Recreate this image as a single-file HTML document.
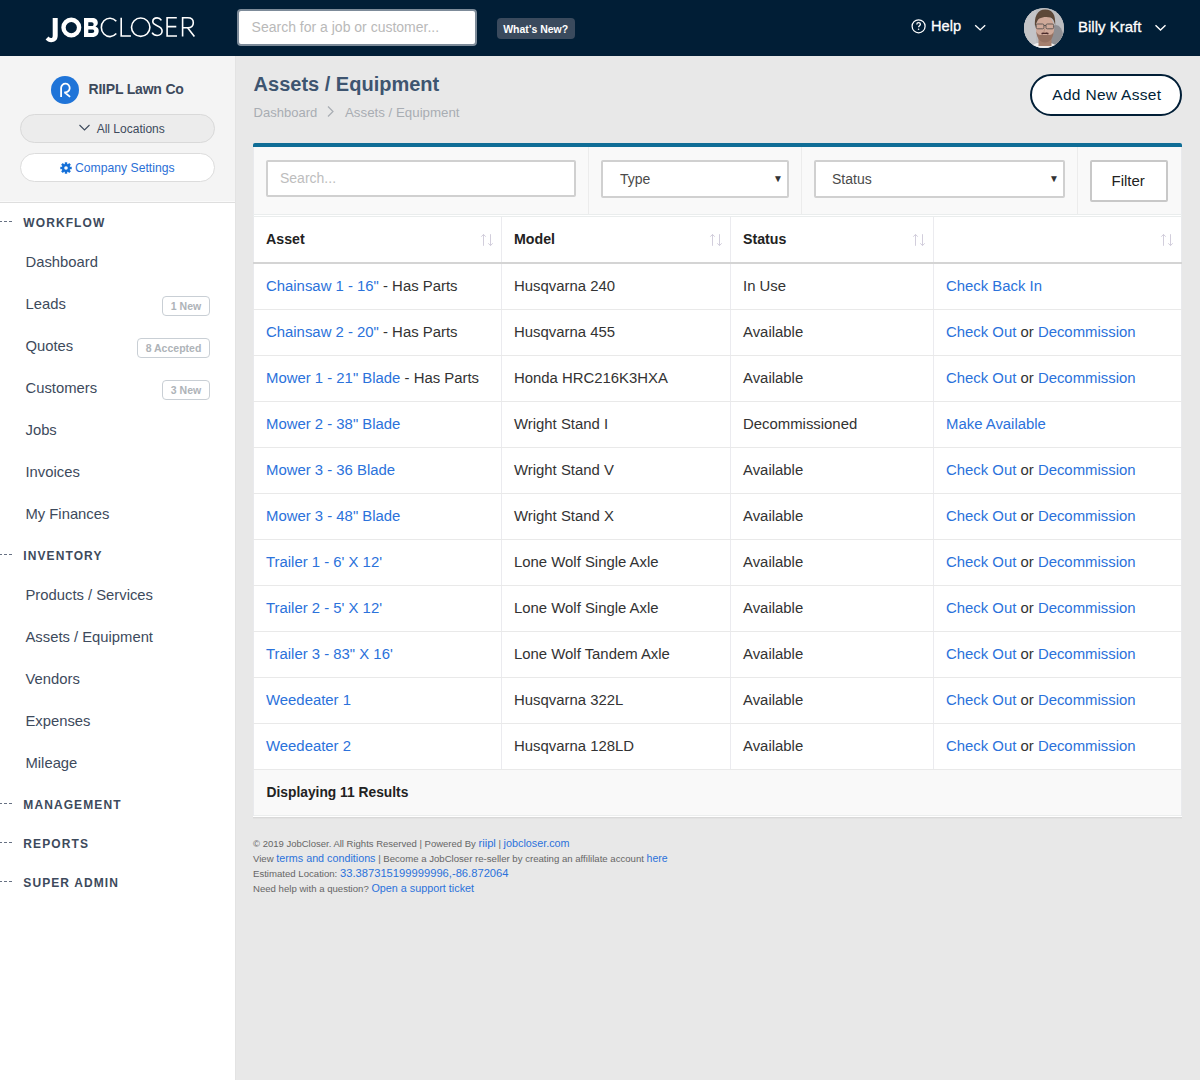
<!DOCTYPE html>
<html><head><meta charset="utf-8">
<style>
*{box-sizing:border-box;margin:0;padding:0}
html,body{width:1200px;height:1080px;overflow:hidden;background:#e8e8e8;font-family:"Liberation Sans",sans-serif;position:relative}
.abs{position:absolute}
.t{position:absolute;white-space:nowrap;line-height:1}
</style></head><body>
<div class="abs" style="left:0px;top:0px;width:1200px;height:56px;background:#011e36"></div>
<svg class="abs" style="left:0;top:0" width="200" height="56" viewBox="0 0 200 56">
<g fill="#fff">
<path d="M52.7 18 h5 v17.5 c0 4.6 -3 6.7 -6.5 6.7 c-2.3 0 -4.2 -1 -5.6 -2.6 l2.9 -3 c0.8 1 1.7 1.5 2.6 1.5 c1.1 0 1.6 -0.8 1.6 -2.7 z"/>
<path fill-rule="evenodd" d="M71.3 17.5 a10 10 0 1 1 0 20 a10 10 0 1 1 0 -20 z M71.3 22 a5.6 5.6 0 1 0 0 11.2 a5.6 5.6 0 1 0 0 -11.2 z"/>
<path fill-rule="evenodd" d="M84 18 h8.2 c3.6 0 5.6 2 5.6 4.8 c0 1.8 -0.9 3 -2.3 3.7 c2 0.6 3.2 2.2 3.2 4.4 c0 3.3 -2.4 6.1 -6.3 6.1 h-8.4 z M88.3 22.2 v3.9 h3.3 c1.3 0 2 -0.8 2 -1.95 c0 -1.2 -0.7 -1.95 -2 -1.95 z M88.3 29.6 v3.3 h3.8 c1.4 0 2.1 -0.7 2.1 -1.65 c0 -1 -0.7 -1.65 -2.1 -1.65 z"/>
</g>
<g fill="none" stroke="#fff" stroke-width="1.6">
<path d="M116.3 21.2 a8.6 9.2 0 1 0 0 12.4"/>
<path d="M121.2 17.8 v18.2 h9.7"/>
<circle cx="140.7" cy="27.2" r="9.2"/>
<path d="M161.4 20.3 c-1 -1.6 -2.5 -2.4 -4.3 -2.4 c-2.6 0 -4.3 1.5 -4.3 3.7 c0 5.1 9.3 3.2 9.3 9.4 c0 2.6 -2.1 4.5 -5 4.5 c-2.2 0 -3.9 -1 -5 -2.8"/>
<path d="M176.8 17.8 h-9.7 v18.2 h9.9 M167.1 26.6 h9.2"/>
<path d="M182.6 36.6 v-18.8 h5.2 c3.5 0 5.5 2 5.5 5 c0 3 -2 5 -5.5 5 h-5.2 M187.6 27.8 l6.8 8.8"/>
</g>
</svg>
<div class="abs" style="left:237px;top:9px;width:240px;height:37px;background:#fff;border:2px solid #7d8b99;border-radius:4px"></div>
<div class="t" style="left:251.60px;top:19.75px;font-size:14px;color:#b9b9b9;">Search for a job or customer...</div>
<div class="abs" style="left:497px;top:18px;width:78px;height:21px;background:#3a4a5d;border-radius:4px"></div>
<div class="t" style="left:503.20px;top:23.71px;font-size:10.5px;color:#fff;font-weight:bold;">What&#8217;s New?</div>
<svg class="abs" style="left:900px;top:10px" width="100" height="36" viewBox="900 10 100 36">
<circle cx="918.6" cy="26.25" r="6.5" fill="none" stroke="#fff" stroke-width="1.25"/>
<path d="M916.8 24.4 c0 -1.1 0.8 -1.8 1.8 -1.8 c1 0 1.8 0.7 1.8 1.7 c0 1.3 -1.8 1.5 -1.8 2.9" fill="none" stroke="#fff" stroke-width="1.3"/>
<circle cx="918.6" cy="29.3" r="0.8" fill="#fff"/>
<path d="M975.2 25.3 l5 4.6 l5 -4.6" fill="none" stroke="#fff" stroke-width="1.4"/>
</svg>
<div class="t" style="left:931.00px;top:19.34px;font-size:14.6px;color:#fff;-webkit-text-stroke:0.3px #fff">Help</div>
<div class="abs" style="left:1024px;top:8px;width:40px;height:40px;border-radius:50%;overflow:hidden;background:#b6b7ba">
<svg style="display:block" width="40" height="40" viewBox="0 0 40 40">
<rect x="-2" y="-2" width="44" height="44" fill="#bcbdc0"/>
<rect x="0" y="0" width="12" height="40" fill="#c3c4c7"/>
<ellipse cx="32" cy="28" rx="7" ry="11" fill="#8f8f93"/>
<path d="M6 42 c1 -5 5 -7 9 -7 h10 c4 0 8 2 9 7 z" fill="#efefef"/>
<rect x="14.5" y="28" width="13" height="10" fill="#a5806e"/>
<ellipse cx="21" cy="20" rx="9.3" ry="12.5" fill="#cfa999"/>
<path d="M11.2 20 c-1.5 -11 2 -18.5 10 -18.5 c7.5 0 10.5 5 10 16 c-0.8 -3.5 -1.8 -7 -4.8 -8 c-3 -1 -8 -0.8 -11 1 c-2 1.3 -3 4 -4.2 9.5z" fill="#5d4838"/>
<path d="M12.3 23.5 c0.5 7 4 11 8.7 11 c4.7 0 8.2 -4 8.7 -11 c-1 2.5 -2.5 3.5 -4.2 3.5 h-9 c-1.7 0 -3.2 -1 -4.2 -3.5z" fill="#957262"/>
<rect x="12.3" y="16" width="7.6" height="4.8" rx="1.3" fill="none" stroke="#57514f" stroke-width="0.9"/>
<rect x="22" y="16" width="7.6" height="4.8" rx="1.3" fill="none" stroke="#57514f" stroke-width="0.9"/>
<path d="M19.9 17.5 h2.1" stroke="#57514f" stroke-width="0.9"/>
<path d="M17.3 25 c2 -1 5.4 -1 7.4 0 l-0.5 1.4 c-2 -0.5 -4.4 -0.5 -6.4 0z" fill="#4b2b2b"/>
<path d="M20.8 20.5 l-1 4 h2.2" fill="none" stroke="#b38b7b" stroke-width="0.8"/>
</svg></div>
<div class="t" style="left:1078.00px;top:18.70px;font-size:15px;color:#fff;-webkit-text-stroke:0.3px #fff">Billy Kraft</div>
<svg class="abs" style="left:1150px;top:20px" width="20" height="16" viewBox="1150 20 20 16">
<path d="M1155.5 25.3 l5 4.8 l5 -4.8" fill="none" stroke="#fff" stroke-width="1.4"/></svg>
<div class="abs" style="left:0px;top:56px;width:235px;height:1024px;background:#fff"></div>
<div class="abs" style="left:0px;top:56px;width:235px;height:146px;background:#f4f4f4"></div>
<div class="abs" style="left:0px;top:201px;width:235px;height:1px;background:#fafafa"></div>
<div class="abs" style="left:0px;top:202px;width:235px;height:1px;background:#dedede"></div>
<div class="abs" style="left:51px;top:76px;width:28px;height:28px;background:#1f74d8;border-radius:50%"></div>
<svg class="abs" style="left:51px;top:76px" width="29" height="29" viewBox="0 0 29 29">
<path d="M10.1 21 V12 A4.3 4.3 0 1 1 13.5 16.2 L19.1 20.9" fill="none" stroke="#fff" stroke-width="1.8"/></svg>
<div class="t" style="left:88.50px;top:82.35px;font-size:14px;color:#3d4a5c;font-weight:bold;letter-spacing:-0.2px">RIIPL Lawn Co</div>
<div class="abs" style="left:20px;top:114px;width:195px;height:29px;background:#ececec;border:1px solid #d9d9d9;border-radius:15px"></div>
<svg class="abs" style="left:76px;top:121.5px" width="16" height="12" viewBox="0 0 16 12">
<path d="M3.5 3 l5 5 l5 -5" fill="none" stroke="#3d4a5c" stroke-width="1.1"/></svg>
<div class="t" style="left:96.70px;top:122.64px;font-size:12px;color:#3d4a5c;">All Locations</div>
<div class="abs" style="left:20px;top:153px;width:195px;height:29px;background:#fff;border:1px solid #dcdcdc;border-radius:15px"></div>
<svg class="abs" style="left:59px;top:161.4px" width="14" height="14" viewBox="0 0 14 14">
<g transform="translate(7 7)" fill="#1470d8">
<circle r="4.1"/>
<rect x="-1.2" y="-5.7" width="2.4" height="11.4"/>
<rect x="-1.2" y="-5.7" width="2.4" height="11.4" transform="rotate(45)"/>
<rect x="-1.2" y="-5.7" width="2.4" height="11.4" transform="rotate(90)"/>
<rect x="-1.2" y="-5.7" width="2.4" height="11.4" transform="rotate(135)"/>
<circle r="1.8" fill="#fff"/>
</g></svg>
<div class="t" style="left:75.00px;top:161.67px;font-size:12.2px;color:#2a6fd6;">Company Settings</div>
<div class="t" style="left:23.30px;top:216.94px;font-size:12px;color:#3d4a5c;font-weight:bold;letter-spacing:1.1px">WORKFLOW</div>
<div class="abs" style="left:-1px;top:221px;width:13px;height:1px;background:repeating-linear-gradient(to right,#677183 0 3px,transparent 3px 5px)"></div>
<div class="t" style="left:25.50px;top:254.77px;font-size:14.8px;color:#3d4a5c;">Dashboard</div>
<div class="t" style="left:25.50px;top:296.97px;font-size:14.8px;color:#3d4a5c;">Leads</div>
<div class="t" style="left:25.50px;top:338.97px;font-size:14.8px;color:#3d4a5c;">Quotes</div>
<div class="t" style="left:25.50px;top:380.97px;font-size:14.8px;color:#3d4a5c;">Customers</div>
<div class="t" style="left:25.50px;top:422.97px;font-size:14.8px;color:#3d4a5c;">Jobs</div>
<div class="t" style="left:25.50px;top:464.77px;font-size:14.8px;color:#3d4a5c;">Invoices</div>
<div class="t" style="left:25.50px;top:506.97px;font-size:14.8px;color:#3d4a5c;">My Finances</div>
<div class="t" style="left:23.30px;top:550.24px;font-size:12px;color:#3d4a5c;font-weight:bold;letter-spacing:1.1px">INVENTORY</div>
<div class="abs" style="left:-1px;top:554px;width:13px;height:1px;background:repeating-linear-gradient(to right,#677183 0 3px,transparent 3px 5px)"></div>
<div class="t" style="left:25.50px;top:588.07px;font-size:14.8px;color:#3d4a5c;">Products / Services</div>
<div class="t" style="left:25.50px;top:630.27px;font-size:14.8px;color:#3d4a5c;">Assets / Equipment</div>
<div class="t" style="left:25.50px;top:672.07px;font-size:14.8px;color:#3d4a5c;">Vendors</div>
<div class="t" style="left:25.50px;top:714.27px;font-size:14.8px;color:#3d4a5c;">Expenses</div>
<div class="t" style="left:25.50px;top:755.87px;font-size:14.8px;color:#3d4a5c;">Mileage</div>
<div class="t" style="left:23.30px;top:799.14px;font-size:12px;color:#3d4a5c;font-weight:bold;letter-spacing:1.1px">MANAGEMENT</div>
<div class="abs" style="left:-1px;top:803px;width:13px;height:1px;background:repeating-linear-gradient(to right,#677183 0 3px,transparent 3px 5px)"></div>
<div class="t" style="left:23.30px;top:838.04px;font-size:12px;color:#3d4a5c;font-weight:bold;letter-spacing:1.1px">REPORTS</div>
<div class="abs" style="left:-1px;top:842px;width:13px;height:1px;background:repeating-linear-gradient(to right,#677183 0 3px,transparent 3px 5px)"></div>
<div class="t" style="left:23.30px;top:876.94px;font-size:12px;color:#3d4a5c;font-weight:bold;letter-spacing:1.1px">SUPER ADMIN</div>
<div class="abs" style="left:-1px;top:881px;width:13px;height:1px;background:repeating-linear-gradient(to right,#677183 0 3px,transparent 3px 5px)"></div>
<div class="abs" style="left:162px;top:296px;width:48px;height:20px;border:1px solid #c9cfd5;border-radius:4px;color:#aeb3b8;font-size:10.5px;font-weight:bold;line-height:18px;text-align:center;white-space:nowrap">1 New</div>
<div class="abs" style="left:137px;top:338px;width:73px;height:20px;border:1px solid #c9cfd5;border-radius:4px;color:#aeb3b8;font-size:10.5px;font-weight:bold;line-height:18px;text-align:center;white-space:nowrap">8 Accepted</div>
<div class="abs" style="left:162px;top:380px;width:48px;height:20px;border:1px solid #c9cfd5;border-radius:4px;color:#aeb3b8;font-size:10.5px;font-weight:bold;line-height:18px;text-align:center;white-space:nowrap">3 New</div>
<div class="abs" style="left:235px;top:56px;width:1px;height:1024px;background:#e3e3e3"></div>
<div class="t" style="left:253.60px;top:73.97px;font-size:20px;color:#3e5570;font-weight:bold;">Assets / Equipment</div>
<div class="t" style="left:253.60px;top:106.00px;font-size:13px;color:#a8adb3;">Dashboard</div>
<svg class="abs" style="left:323px;top:104px" width="14" height="16" viewBox="0 0 14 16">
<path d="M5 2.5 l5 5 l-5 5" fill="none" stroke="#a8adb3" stroke-width="1.2"/></svg>
<div class="t" style="left:345.00px;top:105.74px;font-size:13.3px;color:#a8adb3;">Assets / Equipment</div>
<div class="abs" style="left:1030px;top:74px;width:152px;height:42px;background:#fff;border:2px solid #011e36;border-radius:21px"></div>
<div class="t" style="left:1052.30px;top:86.58px;font-size:15.5px;color:#011e36;letter-spacing:0.3px">Add New Asset</div>
<div class="abs" style="left:253px;top:143px;width:929px;height:4px;background:#0f6d96;border-radius:2px 2px 0 0"></div>
<div class="abs" style="left:253px;top:147px;width:929px;height:670px;background:#fff;border-left:1px solid #e9eaed;border-right:1px solid #e9eaed"></div>
<div class="abs" style="left:254px;top:147px;width:927px;height:67px;background:#f9f9f9"></div>
<div class="abs" style="left:588px;top:147px;width:1px;height:67px;background:#ececec"></div>
<div class="abs" style="left:801px;top:147px;width:1px;height:67px;background:#ececec"></div>
<div class="abs" style="left:1077px;top:147px;width:1px;height:67px;background:#ececec"></div>
<div class="abs" style="left:253px;top:214px;width:929px;height:1px;background:#eaeded"></div>
<div class="abs" style="left:253px;top:216px;width:929px;height:1px;background:#eaeded"></div>
<div class="abs" style="left:266px;top:160px;width:310px;height:37px;background:#fff;border:2px solid #d0d0d0;border-radius:2px"></div>
<div class="t" style="left:280.00px;top:170.85px;font-size:14px;color:#bdbdbd;">Search...</div>
<div class="abs" style="left:601px;top:160px;width:188px;height:38px;background:#fff;border:2px solid #d0d0d0;border-radius:2px"></div>
<div class="t" style="left:620.00px;top:172.45px;font-size:14px;color:#4a4a4a;">Type</div>
<div class="t" style="left:773.00px;top:173.53px;font-size:10px;color:#333;">&#9660;</div>
<div class="abs" style="left:814px;top:160px;width:251px;height:38px;background:#fff;border:2px solid #d0d0d0;border-radius:2px"></div>
<div class="t" style="left:832.00px;top:172.45px;font-size:14px;color:#4a4a4a;">Status</div>
<div class="t" style="left:1049.00px;top:173.53px;font-size:10px;color:#333;">&#9660;</div>
<div class="abs" style="left:1090px;top:160px;width:78px;height:42px;background:#fff;border:2px solid #c8c8c8;border-radius:2px"></div>
<div class="t" style="left:1111.50px;top:173.30px;font-size:15px;color:#222;">Filter</div>
<div class="abs" style="left:501px;top:217px;width:1px;height:553px;background:#ebebef"></div>
<div class="abs" style="left:730px;top:217px;width:1px;height:553px;background:#ebebef"></div>
<div class="abs" style="left:933px;top:217px;width:1px;height:553px;background:#ebebef"></div>
<div class="abs" style="left:253px;top:262px;width:929px;height:2px;background:#d4d4d4"></div>
<div class="t" style="left:266.00px;top:231.98px;font-size:14.2px;color:#222;font-weight:bold;">Asset</div>
<svg class="abs" style="left:480px;top:232px" width="14" height="16" viewBox="0 0 14 16">
<path d="M3.5 13.8 v-11.5 M1.3 4.7 l2.2 -2.3 l2.2 2.3" fill="none" stroke="#d2cedc" stroke-width="1"/>
<path d="M10.5 2.2 v11.5 M8.3 11.3 l2.2 2.3 l2.2 -2.3" fill="none" stroke="#d2cedc" stroke-width="1"/></svg>
<div class="t" style="left:514.00px;top:231.98px;font-size:14.2px;color:#222;font-weight:bold;">Model</div>
<svg class="abs" style="left:709px;top:232px" width="14" height="16" viewBox="0 0 14 16">
<path d="M3.5 13.8 v-11.5 M1.3 4.7 l2.2 -2.3 l2.2 2.3" fill="none" stroke="#d2cedc" stroke-width="1"/>
<path d="M10.5 2.2 v11.5 M8.3 11.3 l2.2 2.3 l2.2 -2.3" fill="none" stroke="#d2cedc" stroke-width="1"/></svg>
<div class="t" style="left:743.00px;top:231.98px;font-size:14.2px;color:#222;font-weight:bold;">Status</div>
<svg class="abs" style="left:912px;top:232px" width="14" height="16" viewBox="0 0 14 16">
<path d="M3.5 13.8 v-11.5 M1.3 4.7 l2.2 -2.3 l2.2 2.3" fill="none" stroke="#d2cedc" stroke-width="1"/>
<path d="M10.5 2.2 v11.5 M8.3 11.3 l2.2 2.3 l2.2 -2.3" fill="none" stroke="#d2cedc" stroke-width="1"/></svg>
<svg class="abs" style="left:1160px;top:232px" width="14" height="16" viewBox="0 0 14 16">
<path d="M3.5 13.8 v-11.5 M1.3 4.7 l2.2 -2.3 l2.2 2.3" fill="none" stroke="#d2cedc" stroke-width="1"/>
<path d="M10.5 2.2 v11.5 M8.3 11.3 l2.2 2.3 l2.2 -2.3" fill="none" stroke="#d2cedc" stroke-width="1"/></svg>
<div class="abs" style="left:253px;top:309px;width:929px;height:1px;background:#e9e9e9"></div>
<div class="t" style="left:266.00px;top:278.79px;font-size:14.9px;color:#333333;"><span style="color:#2b72db">Chainsaw 1 - 16"</span> - Has Parts</div>
<div class="t" style="left:514.00px;top:278.79px;font-size:14.9px;color:#333333;">Husqvarna 240</div>
<div class="t" style="left:743.00px;top:278.79px;font-size:14.9px;color:#333333;">In Use</div>
<div class="t" style="left:946.00px;top:278.79px;font-size:14.9px;color:#333333;"><span style="color:#2b72db">Check Back In</span></div>
<div class="abs" style="left:253px;top:355px;width:929px;height:1px;background:#e9e9e9"></div>
<div class="t" style="left:266.00px;top:324.79px;font-size:14.9px;color:#333333;"><span style="color:#2b72db">Chainsaw 2 - 20"</span> - Has Parts</div>
<div class="t" style="left:514.00px;top:324.79px;font-size:14.9px;color:#333333;">Husqvarna 455</div>
<div class="t" style="left:743.00px;top:324.79px;font-size:14.9px;color:#333333;">Available</div>
<div class="t" style="left:946.00px;top:324.79px;font-size:14.9px;color:#333333;"><span style="color:#2b72db">Check Out</span> or <span style="color:#2b72db">Decommission</span></div>
<div class="abs" style="left:253px;top:401px;width:929px;height:1px;background:#e9e9e9"></div>
<div class="t" style="left:266.00px;top:370.79px;font-size:14.9px;color:#333333;"><span style="color:#2b72db">Mower 1 - 21" Blade</span> - Has Parts</div>
<div class="t" style="left:514.00px;top:370.79px;font-size:14.9px;color:#333333;">Honda HRC216K3HXA</div>
<div class="t" style="left:743.00px;top:370.79px;font-size:14.9px;color:#333333;">Available</div>
<div class="t" style="left:946.00px;top:370.79px;font-size:14.9px;color:#333333;"><span style="color:#2b72db">Check Out</span> or <span style="color:#2b72db">Decommission</span></div>
<div class="abs" style="left:253px;top:447px;width:929px;height:1px;background:#e9e9e9"></div>
<div class="t" style="left:266.00px;top:416.79px;font-size:14.9px;color:#333333;"><span style="color:#2b72db">Mower 2 - 38" Blade</span></div>
<div class="t" style="left:514.00px;top:416.79px;font-size:14.9px;color:#333333;">Wright Stand I</div>
<div class="t" style="left:743.00px;top:416.79px;font-size:14.9px;color:#333333;">Decommissioned</div>
<div class="t" style="left:946.00px;top:416.79px;font-size:14.9px;color:#333333;"><span style="color:#2b72db">Make Available</span></div>
<div class="abs" style="left:253px;top:493px;width:929px;height:1px;background:#e9e9e9"></div>
<div class="t" style="left:266.00px;top:462.79px;font-size:14.9px;color:#333333;"><span style="color:#2b72db">Mower 3 - 36 Blade</span></div>
<div class="t" style="left:514.00px;top:462.79px;font-size:14.9px;color:#333333;">Wright Stand V</div>
<div class="t" style="left:743.00px;top:462.79px;font-size:14.9px;color:#333333;">Available</div>
<div class="t" style="left:946.00px;top:462.79px;font-size:14.9px;color:#333333;"><span style="color:#2b72db">Check Out</span> or <span style="color:#2b72db">Decommission</span></div>
<div class="abs" style="left:253px;top:539px;width:929px;height:1px;background:#e9e9e9"></div>
<div class="t" style="left:266.00px;top:508.79px;font-size:14.9px;color:#333333;"><span style="color:#2b72db">Mower 3 - 48" Blade</span></div>
<div class="t" style="left:514.00px;top:508.79px;font-size:14.9px;color:#333333;">Wright Stand X</div>
<div class="t" style="left:743.00px;top:508.79px;font-size:14.9px;color:#333333;">Available</div>
<div class="t" style="left:946.00px;top:508.79px;font-size:14.9px;color:#333333;"><span style="color:#2b72db">Check Out</span> or <span style="color:#2b72db">Decommission</span></div>
<div class="abs" style="left:253px;top:585px;width:929px;height:1px;background:#e9e9e9"></div>
<div class="t" style="left:266.00px;top:554.79px;font-size:14.9px;color:#333333;"><span style="color:#2b72db">Trailer 1 - 6' X 12'</span></div>
<div class="t" style="left:514.00px;top:554.79px;font-size:14.9px;color:#333333;">Lone Wolf Single Axle</div>
<div class="t" style="left:743.00px;top:554.79px;font-size:14.9px;color:#333333;">Available</div>
<div class="t" style="left:946.00px;top:554.79px;font-size:14.9px;color:#333333;"><span style="color:#2b72db">Check Out</span> or <span style="color:#2b72db">Decommission</span></div>
<div class="abs" style="left:253px;top:631px;width:929px;height:1px;background:#e9e9e9"></div>
<div class="t" style="left:266.00px;top:600.79px;font-size:14.9px;color:#333333;"><span style="color:#2b72db">Trailer 2 - 5' X 12'</span></div>
<div class="t" style="left:514.00px;top:600.79px;font-size:14.9px;color:#333333;">Lone Wolf Single Axle</div>
<div class="t" style="left:743.00px;top:600.79px;font-size:14.9px;color:#333333;">Available</div>
<div class="t" style="left:946.00px;top:600.79px;font-size:14.9px;color:#333333;"><span style="color:#2b72db">Check Out</span> or <span style="color:#2b72db">Decommission</span></div>
<div class="abs" style="left:253px;top:677px;width:929px;height:1px;background:#e9e9e9"></div>
<div class="t" style="left:266.00px;top:646.79px;font-size:14.9px;color:#333333;"><span style="color:#2b72db">Trailer 3 - 83" X 16'</span></div>
<div class="t" style="left:514.00px;top:646.79px;font-size:14.9px;color:#333333;">Lone Wolf Tandem Axle</div>
<div class="t" style="left:743.00px;top:646.79px;font-size:14.9px;color:#333333;">Available</div>
<div class="t" style="left:946.00px;top:646.79px;font-size:14.9px;color:#333333;"><span style="color:#2b72db">Check Out</span> or <span style="color:#2b72db">Decommission</span></div>
<div class="abs" style="left:253px;top:723px;width:929px;height:1px;background:#e9e9e9"></div>
<div class="t" style="left:266.00px;top:692.79px;font-size:14.9px;color:#333333;"><span style="color:#2b72db">Weedeater 1</span></div>
<div class="t" style="left:514.00px;top:692.79px;font-size:14.9px;color:#333333;">Husqvarna 322L</div>
<div class="t" style="left:743.00px;top:692.79px;font-size:14.9px;color:#333333;">Available</div>
<div class="t" style="left:946.00px;top:692.79px;font-size:14.9px;color:#333333;"><span style="color:#2b72db">Check Out</span> or <span style="color:#2b72db">Decommission</span></div>
<div class="abs" style="left:253px;top:769px;width:929px;height:1px;background:#e9e9e9"></div>
<div class="t" style="left:266.00px;top:738.79px;font-size:14.9px;color:#333333;"><span style="color:#2b72db">Weedeater 2</span></div>
<div class="t" style="left:514.00px;top:738.79px;font-size:14.9px;color:#333333;">Husqvarna 128LD</div>
<div class="t" style="left:743.00px;top:738.79px;font-size:14.9px;color:#333333;">Available</div>
<div class="t" style="left:946.00px;top:738.79px;font-size:14.9px;color:#333333;"><span style="color:#2b72db">Check Out</span> or <span style="color:#2b72db">Decommission</span></div>
<div class="abs" style="left:254px;top:770px;width:927px;height:45px;background:#f9f9f9"></div>
<div class="abs" style="left:254px;top:815px;width:927px;height:1px;background:#eceeee"></div>
<div class="abs" style="left:253px;top:816px;width:929px;height:1px;background:#fff"></div>
<div class="abs" style="left:253px;top:817px;width:929px;height:1px;background:#d9d9d9"></div>
<div class="abs" style="left:253px;top:818px;width:929px;height:1px;background:#e2e2e2"></div>
<div class="t" style="left:266.50px;top:786.12px;font-size:13.8px;color:#222;font-weight:bold;">Displaying 11 Results</div>
<div class="t" style="left:253.00px;top:837.96px;font-size:9.5px;color:#666;">&copy; 2019 JobCloser. All Rights Reserved | Powered By <span style="color:#2b72db;font-size:11.2px">riipl</span> | <span style="color:#2b72db;font-size:10.8px">jobcloser.com</span></div>
<div class="t" style="left:253.00px;top:852.87px;font-size:9.6px;color:#666;">View <span style="color:#2b72db;font-size:10.75px">terms and conditions</span> | Become a JobCloser re-seller by creating an affililate account <span style="color:#2b72db;font-size:10.5px">here</span></div>
<div class="t" style="left:253.00px;top:867.87px;font-size:9.6px;color:#666;">Estimated Location: <span style="color:#2b72db;font-size:11.2px">33.387315199999996,-86.872064</span></div>
<div class="t" style="left:253.00px;top:882.87px;font-size:9.6px;color:#666;">Need help with a question? <span style="color:#2b72db;font-size:10.8px">Open a support ticket</span></div>
</body></html>
